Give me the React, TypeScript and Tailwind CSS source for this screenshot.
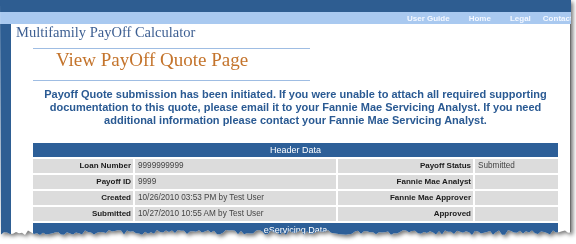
const rows = [
  ['Loan Number', '9999999999', 'Payoff Status', 'Submitted'],
  ['Payoff ID', '9999', 'Fannie Mae Analyst', ''],
  ['Created', '10/26/2010 03:53 PM by Test User', 'Fannie Mae Approver', ''],
  ['Submitted', '10/27/2010 10:55 AM by Test User', 'Approved', ''],
];

// torn paper edge along the bottom of the frame
const tornEdge = (width: number, base: number): string => {
  let seed = 7;
  const rand = () => {
    seed = (seed * 9301 + 49297) % 233280;
    return seed / 233280;
  };
  const pts: Array<string> = ['0px 0px', `${width}px 0px`];
  for (let x = width; x >= 0; x -= 3) {
    pts.push(`${x}px ${(base + rand() * 5).toFixed(1)}px`);
  }
  return `polygon(${pts.join(', ')})`;
};

const Label = ({ text }: { text: string }) => (
  <div className="h-[14px] bg-[#dcdcdc] pr-[2px] text-right text-[8px] font-bold leading-[14px] text-[#1c1c1c]">
    {text}
  </div>
);

const Value = ({ text }: { text: string }) => (
  <div className="h-[14px] bg-[#dcdcdc] pl-[3px] text-[8.2px] leading-[14px] text-[#444]">
    {text}
  </div>
);

const Bar = ({ text }: { text: string }) => (
  <div className="col-span-4 h-[14px] bg-[#2d5f98] text-center text-[9px] leading-[14px] text-white">
    {text}
  </div>
);

export default function App() {
  return (
    <div className="h-[244px] w-[576px] overflow-hidden bg-white font-['Liberation_Sans',Arial,sans-serif]">
      <div className="drop-shadow-[2px_2px_2px_rgba(0,0,0,0.55)]">
        <div
          className="flex h-[238px] w-[571px] flex-col bg-white"
          style={{ clipPath: tornEdge(571, 230) }}
        >
          <div className="h-[12px] bg-[#2e5d91]"></div>
          <div className="flex h-[12px] items-center whitespace-nowrap bg-[#a9c9f0] pl-[407px] pt-[1px] text-[8px] font-bold text-[#f4f8ff]">
            <span>User Guide</span>
            <span className="ml-[19px]">Home</span>
            <span className="ml-[19px]">Legal</span>
            <span className="ml-[12px]">Contact</span>
          </div>
          <div className="flex flex-1">
            <div className="w-[11px] bg-[#2e5e93]"></div>
            <div className="flex-1 border-r border-[#6d6d6d]">
              <div className="pl-[5px] font-['Liberation_Serif',serif] text-[14.5px] leading-[17px] text-[#3d5f92]">
                Multifamily PayOff Calculator
              </div>
              <div className="ml-[22px] w-[525px]">
                <div className="mt-[7px] h-[1px] w-[277px] bg-[#9fbde3]"></div>
                <div className="pl-[23px] font-['Liberation_Serif',serif] text-[19px] leading-[22px] text-[#c4742c]">
                  View PayOff Quote Page
                </div>
                <div className="mt-[9px] h-[1px] w-[277px] bg-[#9fbde3]"></div>
                <p className="mt-[7px] text-center text-[11px] font-bold leading-[13px] text-[#2a5a93]">
                  Payoff Quote submission has been initiated. If you were unable to attach all required supporting
                  <br />
                  documentation to this quote, please email it to your Fannie Mae Servicing Analyst. If you need
                  <br />
                  additional information please contact your Fannie Mae Servicing Analyst.
                </p>
                <div className="mt-[16px] grid grid-cols-[100px_201px_135px_83px] gap-[2px]">
                  <Bar text="Header Data" />
                  {rows.map((r) => (
                    <div key={r[0]} className="contents">
                      <Label text={r[0]} />
                      <Value text={r[1]} />
                      <Label text={r[2]} />
                      <Value text={r[3]} />
                    </div>
                  ))}
                  <Bar text="eServicing Data" />
                </div>
              </div>
            </div>
          </div>
        </div>
      </div>
    </div>
  );
}
